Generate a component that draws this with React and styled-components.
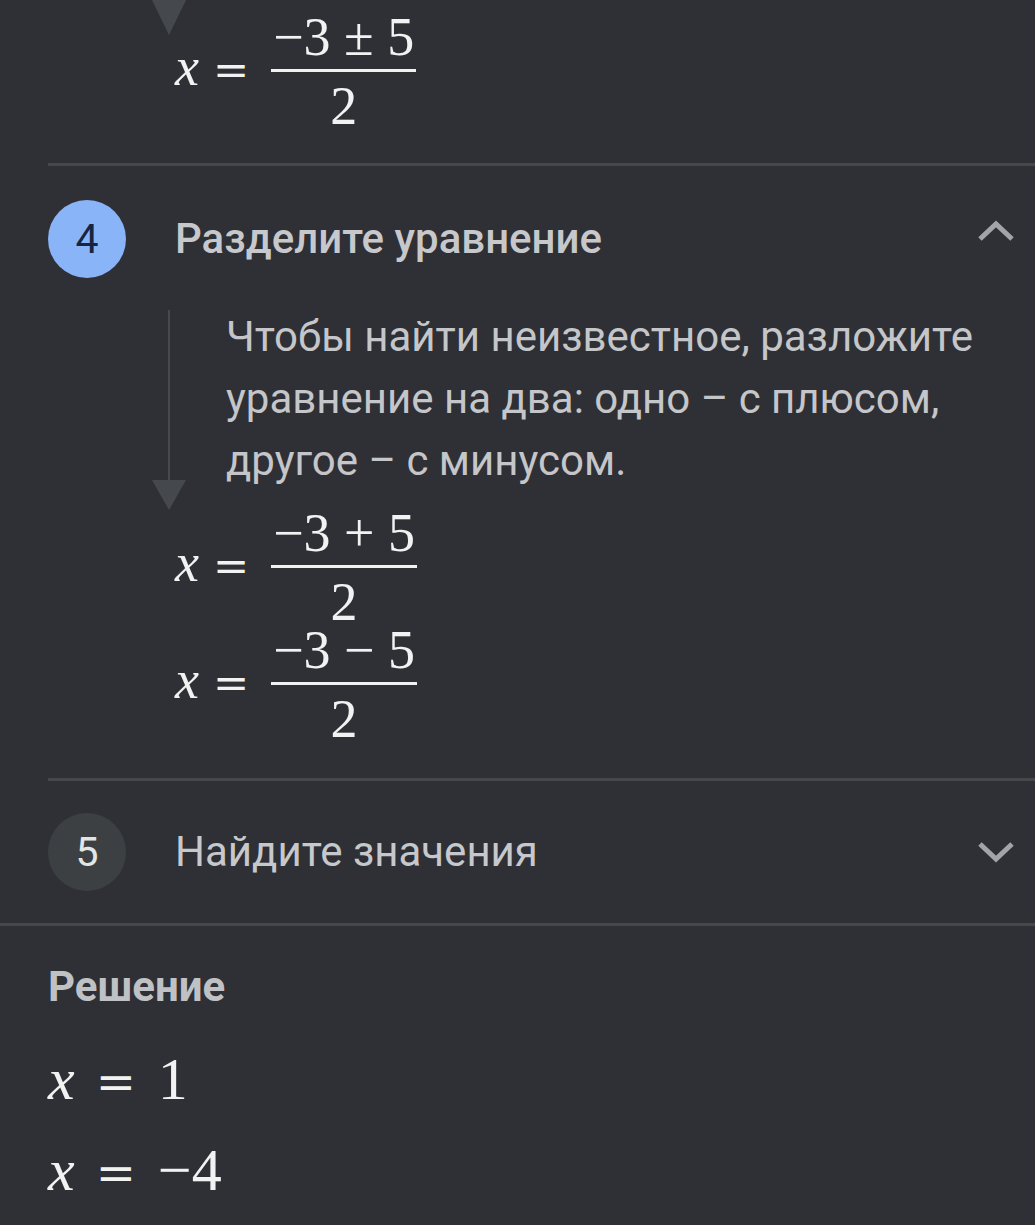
import React from 'react';
import styled, { createGlobalStyle } from 'styled-components';

const GlobalStyle = createGlobalStyle`
  html, body {
    margin: 0;
    padding: 0;
    background: #2f3035;
  }
  body {
    font-family: Roboto, "Noto Sans", sans-serif;
    overflow: hidden;
  }
`;

const Page = styled.div`
  width: 1035px;
  height: 1225px;
  overflow: hidden;
  background: #2f3035;
`;

const Steps = styled.div`
  margin-left: 48px;
`;

const Step = styled.section`
  border-top: ${(p) => (p.first ? 'none' : '3px solid #45474b')};
`;

const StepHeader = styled.div`
  display: flex;
  align-items: center;
  padding: ${(p) => (p.open ? '34px 21px 28px 0' : '32px 21px 32px 0')};
`;

const Badge = styled.div`
  width: 78px;
  height: 78px;
  border-radius: 50%;
  flex-shrink: 0;
  display: flex;
  align-items: center;
  justify-content: center;
  font-size: 41px;
  background: ${(p) => (p.active ? '#8ab4f8' : '#3c4043')};
  color: ${(p) => (p.active ? '#172540' : '#e4e4e4')};
  margin-right: 49px;
`;

const StepTitle = styled.h2`
  flex: 1;
  margin: 0;
  font-size: 42px;
  font-weight: ${(p) => (p.active ? 500 : 400)};
  color: #c6c8cc;
  line-height: 48px;
`;

const Chevron = styled.svg`
  width: 36px;
  height: 22px;
  flex-shrink: 0;
  margin-bottom: ${(p) => (p.up ? '16px' : '0')};
`;

const StepBody = styled.div`
  padding: 0 0 ${(p) => (p.tail ? 35 : 37)}px 104px;
`;

const ExplainRow = styled.div`
  display: flex;
`;

const Connector = styled.div`
  width: 34px;
  flex-shrink: 0;
  display: flex;
  flex-direction: column;
  align-items: center;
  padding-top: ${(p) => (p.tipOnly ? '0' : '4px')};
`;

const ConnectorLine = styled.div`
  flex: 1;
  width: 2px;
  background: #45494d;
`;

const ArrowHead = styled.svg`
  display: block;
  width: 34px;
  height: ${(p) => p.h}px;
`;

const Explain = styled.p`
  margin: 0 0 0 40px;
  padding-bottom: 18px;
  font-size: 42px;
  line-height: 62px;
  color: #c4c6ca;
`;

const EqList = styled.div`
  display: flex;
  flex-direction: column;
  gap: 4px;
  padding-left: 23px;
  margin-top: ${(p) => p.shift || 0}px;
`;

const Eq = styled.div`
  display: flex;
  align-items: center;
  font-family: "Liberation Serif", "Times New Roman", serif;
  font-size: 54px;
  color: #f2f2f2;
`;

const Lhs = styled.span`
  display: inline-flex;
  align-items: baseline;
  line-height: 1;
  padding-bottom: 9px;
`;

const Var = styled.i`
  font-style: italic;
`;

const Op = styled.span`
  font-family: "DejaVu Serif", "Liberation Serif", serif;
  font-size: 0.8em;
  margin: 0 ${(p) => p.right}px 0 ${(p) => p.left}px;
`;

const Fraction = styled.span`
  display: inline-flex;
  flex-direction: column;
  align-items: center;
  margin-left: 2px;
`;

const Num = styled.span`
  line-height: 44px;
  margin-bottom: 10px;
  padding: 0 2px;
  white-space: pre;
`;

const Bar = styled.span`
  align-self: stretch;
  height: 3px;
  background: #f2f2f2;
`;

const Den = styled.span`
  line-height: 44px;
  margin-top: 12px;
`;

const Solution = styled.section`
  border-top: 3px solid #45474b;
  padding: 38px 48px 0;
`;

const SolutionTitle = styled.h3`
  margin: 0 0 39px;
  font-size: 42px;
  font-weight: 700;
  line-height: 46px;
  color: #bfc1c5;
`;

const Answer = styled.div`
  display: flex;
  align-items: baseline;
  font-family: "Liberation Serif", "Times New Roman", serif;
  font-size: 60px;
  line-height: 60px;
  color: #f2f2f2;
  margin-bottom: 28px;
`;

const Arrow = ({ h = 30 }) => (
  <ArrowHead h={h} viewBox={`0 0 34 ${h}`}>
    <polygon points={`0,0 34,0 17,${h}`} fill="#45494d" />
  </ArrowHead>
);

const ChevronIcon = ({ up }) => (
  <Chevron up={up} viewBox="0 0 36 22">
    <polyline
      points={up ? '2,19 18,4 34,19' : '2,3 18,18 34,3'}
      fill="none"
      stroke="#a1a5aa"
      strokeWidth="5"
    />
  </Chevron>
);

const FracEq = ({ num, den }) => (
  <Eq>
    <Lhs>
      <Var>x</Var>
      <Op left={14} right={20}>=</Op>
    </Lhs>
    <Fraction>
      <Num>{num}</Num>
      <Bar />
      <Den>{den}</Den>
    </Fraction>
  </Eq>
);

const App = () => (
  <Page>
    <GlobalStyle />
    <Steps>
      <Step first>
        <StepBody tail>
          <Connector tipOnly>
            <Arrow h={35} />
          </Connector>
          <EqList shift={-20}>
            <FracEq num="−3 ± 5" den="2" />
          </EqList>
        </StepBody>
      </Step>

      <Step>
        <StepHeader open>
          <Badge active>4</Badge>
          <StepTitle active>Разделите уравнение</StepTitle>
          <ChevronIcon up />
        </StepHeader>
        <StepBody>
          <ExplainRow>
            <Connector>
              <ConnectorLine />
              <Arrow h={30} />
            </Connector>
            <Explain>
              Чтобы найти неизвестное, разложите уравнение на два: одно – с плюсом,
              другое – с минусом.
            </Explain>
          </ExplainRow>
          <EqList shift={1}>
            <FracEq num="−3 + 5" den="2" />
            <FracEq num="−3 − 5" den="2" />
          </EqList>
        </StepBody>
      </Step>

      <Step>
        <StepHeader>
          <Badge>5</Badge>
          <StepTitle>Найдите значения</StepTitle>
          <ChevronIcon />
        </StepHeader>
      </Step>
    </Steps>

    <Solution>
      <SolutionTitle>Решение</SolutionTitle>
      <Answer>
        <Var>x</Var>
        <Op left={21} right={22}>=</Op>
        <span>1</span>
      </Answer>
      <Answer>
        <Var>x</Var>
        <Op left={21} right={22}>=</Op>
        <span>−4</span>
      </Answer>
    </Solution>
  </Page>
);

export default App;
